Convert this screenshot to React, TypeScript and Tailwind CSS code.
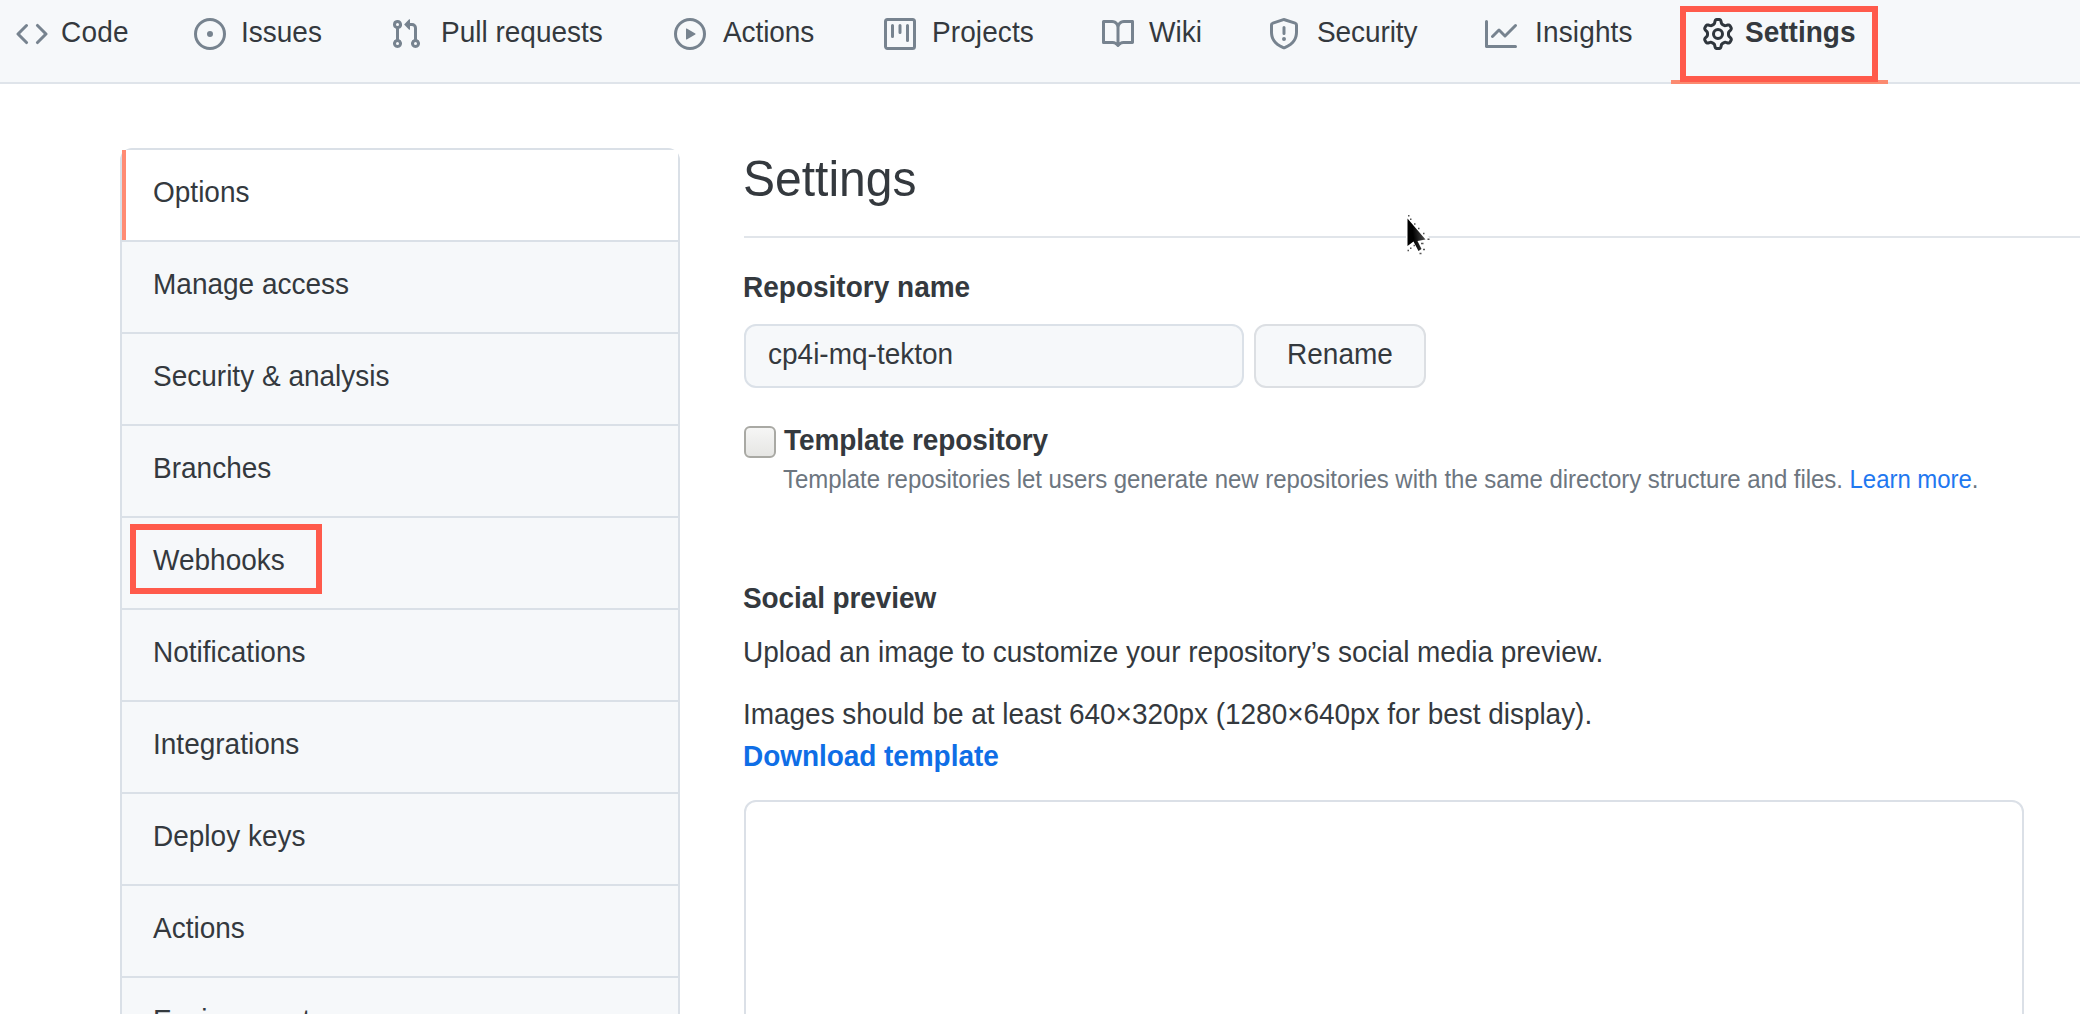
import React from 'react';

const paths = {
  code: 'M4.72 3.22a.75.75 0 011.06 1.06L2.06 8l3.72 3.72a.75.75 0 11-1.06 1.06L.47 8.53a.75.75 0 010-1.06l4.25-4.25zm6.56 0a.75.75 0 10-1.06 1.06L13.94 8l-3.72 3.72a.75.75 0 101.06 1.06l4.25-4.25a.75.75 0 000-1.06l-4.25-4.25z',
  issue: 'M8 9.5a1.5 1.5 0 100-3 1.5 1.5 0 000 3zM8 0a8 8 0 100 16A8 8 0 008 0zM1.5 8a6.5 6.5 0 1113 0 6.5 6.5 0 01-13 0z',
  pull: 'M7.177 3.073L9.573.677A.25.25 0 0110 .854v4.792a.25.25 0 01-.427.177L7.177 3.427a.25.25 0 010-.354zM3.75 2.5a.75.75 0 100 1.5.75.75 0 000-1.5zm-2.25.75a2.25 2.25 0 113 2.122v5.256a2.251 2.251 0 11-1.5 0V5.372A2.25 2.25 0 011.5 3.25zM11 2.5h-1V4h1a1 1 0 011 1v5.628a2.251 2.251 0 101.5 0V5A2.5 2.5 0 0011 2.5zm1 10.25a.75.75 0 111.5 0 .75.75 0 01-1.5 0zM3.75 12a.75.75 0 100 1.5.75.75 0 000-1.5z',
  play: 'M1.5 8a6.5 6.5 0 1113 0 6.5 6.5 0 01-13 0zM8 0a8 8 0 100 16A8 8 0 008 0zM6.379 5.227A.25.25 0 006 5.442v5.117a.25.25 0 00.379.214l4.264-2.559a.25.25 0 000-.428L6.379 5.227z',
  project:
    'M1.75 0A1.75 1.75 0 000 1.75v12.5C0 15.216.784 16 1.75 16h12.5A1.75 1.75 0 0016 14.25V1.75A1.75 1.75 0 0014.25 0H1.75zM1.5 1.75a.25.25 0 01.25-.25h12.5a.25.25 0 01.25.25v12.5a.25.25 0 01-.25.25H1.75a.25.25 0 01-.25-.25V1.75zM11.75 3a.75.75 0 00-.75.75v7.5a.75.75 0 001.5 0v-7.5a.75.75 0 00-.75-.75zm-8.25.75a.75.75 0 011.5 0v5.5a.75.75 0 01-1.5 0v-5.5zM8 3a.75.75 0 00-.75.75v3.5a.75.75 0 001.5 0v-3.5A.75.75 0 008 3z',
  book: 'M0 1.75A.75.75 0 01.75 1h4.253c1.227 0 2.317.59 3 1.501A3.744 3.744 0 0111.006 1h4.245a.75.75 0 01.75.75v10.5a.75.75 0 01-.75.75h-4.507a2.25 2.25 0 00-1.591.659l-.622.621a.75.75 0 01-1.06 0l-.622-.621A2.25 2.25 0 005.258 13H.75a.75.75 0 01-.75-.75V1.75zm8.755 3a2.25 2.25 0 012.25-2.25H14.5v9h-3.757c-.71 0-1.4.201-1.992.572l.004-7.322zm-1.504 7.324l.004-5.073-.002-2.253A2.25 2.25 0 005.003 2.5H1.5v9h3.757a3.75 3.75 0 011.994.574z',
  shield:
    'M7.467.133a1.75 1.75 0 011.066 0l5.25 1.68A1.75 1.75 0 0115 3.48V7c0 1.566-.32 3.182-1.303 4.682-.983 1.498-2.585 2.813-5.032 3.855a1.7 1.7 0 01-1.33 0c-2.447-1.042-4.049-2.357-5.032-3.855C1.32 10.182 1 8.566 1 7V3.48a1.75 1.75 0 011.217-1.667l5.25-1.68zm.61 1.429a.25.25 0 00-.153 0l-5.25 1.68a.25.25 0 00-.174.238V7c0 1.358.275 2.666 1.057 3.86.784 1.194 2.121 2.34 4.366 3.297a.2.2 0 00.154 0c2.245-.956 3.582-2.104 4.366-3.298C13.225 9.666 13.5 8.36 13.5 7V3.48a.25.25 0 00-.174-.237l-5.25-1.68zM9 10.5a1 1 0 11-2 0 1 1 0 012 0zm-.25-5.75a.75.75 0 10-1.5 0v3a.75.75 0 001.5 0v-3z',
  graph:
    'M1.5 1.75a.75.75 0 00-1.5 0v12.5c0 .414.336.75.75.75h14.5a.75.75 0 000-1.5H1.5V1.75zm14.28 2.53a.75.75 0 00-1.06-1.06L10 7.94 7.53 5.47a.75.75 0 00-1.06 0L3.22 8.72a.75.75 0 001.06 1.06L7 7.06l2.47 2.47a.75.75 0 001.06 0l5.25-5.25z',
  gear: 'M7.429 1.525a6.593 6.593 0 011.142 0c.036.003.108.036.137.146l.289 1.105c.147.56.55.967.997 1.189.174.086.341.183.501.29.417.278.97.423 1.53.27l1.102-.303c.11-.03.175.016.195.046.219.31.41.641.573.989.014.031.022.11-.059.19l-.815.806c-.411.406-.562.957-.53 1.456a4.588 4.588 0 010 .582c-.032.499.119 1.05.53 1.456l.815.806c.08.08.073.159.059.19a6.494 6.494 0 01-.573.99c-.02.029-.086.074-.195.045l-1.103-.303c-.559-.153-1.112-.008-1.529.27-.16.107-.327.204-.5.29-.449.222-.851.628-.998 1.189l-.289 1.105c-.029.11-.101.143-.137.146a6.613 6.613 0 01-1.142 0c-.036-.003-.108-.037-.137-.146l-.289-1.105c-.147-.56-.55-.967-.997-1.189a4.502 4.502 0 01-.501-.29c-.417-.278-.97-.423-1.53-.27l-1.102.303c-.11.03-.175-.016-.195-.046a6.492 6.492 0 01-.573-.989c-.014-.031-.022-.11.059-.19l.815-.806c.411-.406.562-.957.53-1.456a4.587 4.587 0 010-.582c.032-.499-.119-1.05-.53-1.456l-.815-.806c-.08-.08-.073-.159-.059-.19a6.44 6.44 0 01.573-.99c.02-.029.086-.075.195-.045l1.103.303c.559.153 1.112.008 1.529-.27.16-.107.327-.204.5-.29.449-.222.851-.628.998-1.189l.289-1.105c.029-.11.101-.143.137-.146zM8 0c-.236 0-.47.01-.701.03-.743.065-1.29.615-1.458 1.261l-.29 1.106c-.017.066-.078.158-.211.224a5.994 5.994 0 00-.668.386c-.123.082-.233.09-.3.071L3.27 2.776c-.644-.177-1.392.02-1.82.63a7.977 7.977 0 00-.704 1.217c-.315.675-.111 1.422.363 1.891l.815.806c.05.048.098.147.088.294a6.084 6.084 0 000 .772c.01.147-.038.246-.088.294l-.815.806c-.474.469-.678 1.216-.363 1.891.2.428.436.835.704 1.218.428.609 1.176.806 1.82.63l1.103-.303c.066-.019.176-.011.299.071.213.143.436.272.668.386.133.066.194.158.212.224l.289 1.106c.169.646.715 1.196 1.458 1.26a8.094 8.094 0 001.402 0c.743-.064 1.29-.614 1.458-1.26l.29-1.106c.017-.066.078-.158.211-.224a5.98 5.98 0 00.668-.386c.123-.082.233-.09.3-.071l1.102.302c.644.177 1.392-.02 1.82-.63.268-.382.505-.789.704-1.217.315-.675.111-1.422-.364-1.891l-.814-.806c-.05-.048-.098-.147-.088-.294a6.1 6.1 0 000-.772c-.01-.147.039-.246.088-.294l.814-.806c.475-.469.679-1.216.364-1.891a7.992 7.992 0 00-.704-1.218c-.428-.609-1.176-.806-1.82-.63l-1.103.303c-.066.019-.176.011-.299-.071a5.991 5.991 0 00-.668-.386c-.133-.066-.194-.158-.212-.224L10.16 1.29C9.99.645 9.444.095 8.701.031A8.094 8.094 0 008 0zm1.5 8a1.5 1.5 0 11-3 0 1.5 1.5 0 013 0zM11 8a3 3 0 11-6 0 3 3 0 016 0z',
};

function Icon({ name, className }: { name: keyof typeof paths; className: string }) {
  return (
    <svg viewBox="0 0 16 16" className={`mt-[18px] size-8 shrink-0 ${className}`} fill="currentColor" fillRule="evenodd" aria-hidden>
      <path d={paths[name]} />
    </svg>
  );
}

// One line of slightly tall lettering, stretched upwards from its baseline.
function Line({ children, className = '' }: { children: React.ReactNode; className?: string }) {
  return <span className={`block w-max origin-[0_74%] translate-y-px scale-y-[1.06] whitespace-nowrap ${className}`}>{children}</span>;
}

const tabs: { label: string; icon: keyof typeof paths; box: string }[] = [
  { label: 'Code', icon: 'code', box: 'w-[178px] gap-[13px] tracking-[0.2px]' },
  { label: 'Issues', icon: 'issue', box: 'w-[196px] gap-[15px]' },
  { label: 'Pull requests', icon: 'pull', box: 'w-[284px] gap-[19px]' },
  { label: 'Actions', icon: 'play', box: 'w-[210px] gap-[17px] tracking-[-0.1px]' },
  { label: 'Projects', icon: 'project', box: 'w-[218px] gap-[16px] tracking-[0.1px]' },
  { label: 'Wiki', icon: 'book', box: 'w-[166px] gap-[15px]' },
  { label: 'Security', icon: 'shield', box: 'w-[217px] gap-[17px] tracking-[-0.1px]' },
  { label: 'Insights', icon: 'graph', box: 'w-[217px] gap-[18px] tracking-[0.15px]' },
];

function TabBar() {
  return (
    <nav className="flex h-[84px] items-start border-b-2 border-[#dfe4ea] bg-[#f6f8fa] pl-4">
      {tabs.map((t) => (
        <a key={t.label} className={`flex shrink-0 items-start ${t.box}`}>
          <Icon name={t.icon} className="text-[#77838f]" />
          <Line className="mt-[11px]">{t.label}</Line>
        </a>
      ))}
      <a className="relative -ml-[31px] flex h-[84px] w-[217px] shrink-0 items-start gap-[11px] border-b-4 border-[#fb8a70] pl-[31px] font-bold">
        <Icon name="gear" className="text-[#2f363d]" />
        <Line className="mt-[11px]">Settings</Line>
        <span className="absolute top-[6px] left-[9px] h-[76px] w-[198px] border-6 border-[#ff5a4b]" />
      </a>
    </nav>
  );
}

const menu = ['Options', 'Manage access', 'Security & analysis', 'Branches', 'Webhooks', 'Notifications', 'Integrations', 'Deploy keys', 'Actions', 'Environments'];

function SideMenu() {
  return (
    <aside className="mt-16 ml-[120px] w-[560px] shrink-0 self-start rounded-xl border-2 border-[#dae0e7] bg-white">
      {menu.map((m) => (
        <a
          key={m}
          className={`relative block h-[92px] border-b-2 border-[#dae0e7] pt-[21px] pl-[31px] ${m === 'Options' ? 'bg-white' : 'bg-[#f6f8fa]'}`}
        >
          {m === 'Options' && <span className="absolute inset-y-0 left-0 w-1 bg-[#ff8b73]" />}
          {m === 'Webhooks' && <span className="absolute top-[6px] left-[8px] h-[70px] w-[192px] border-6 border-[#ff5a4b]" />}
          <Line>{m}</Line>
        </a>
      ))}
    </aside>
  );
}

function Pointer() {
  return (
    <svg className="absolute top-[131px] left-[662px] h-[42px] w-[28px]" viewBox="0 0 28 42">
      <defs>
        <linearGradient id="pointer-fill" x1="0" y1="0.5" x2="1" y2="0.3">
          <stop offset="0.3" stopColor="#000" />
          <stop offset="1" stopColor="#555" />
        </linearGradient>
      </defs>
      <path d="M0 0V36H10L13 40H20V34L23 27V22Z" fill="#fff" />
      <path d="M1.500 3.500V31L7.500 26.500L12.500 36L15.500 34L11.500 26L19.500 24.500Z" fill="url(#pointer-fill)" />
      <path
        d="M2 .8h1.500M4 4.300h1.500M8 9h1.500M12 13.500h1.500M17 18.500h1.500M21.500 24.300h2M15 28.500h2.500M17 34.500h2M13.500 38.500h2M4 33.300h1.500M1.500 35.500h1.500M7.500 30.500h1.500"
        stroke="#555"
        strokeWidth="1.5"
      />
    </svg>
  );
}

function Content() {
  return (
    <main className="relative ml-16 flex-1 pt-[60px]">
      <h1 className="h-[94px] border-b-2 border-[#e1e5ea] text-[48px] leading-[72px]">
        <span className="-ml-px block w-max origin-[0_73%] scale-y-[1.03]">Settings</span>
      </h1>
      <Pointer />
      <h2 className="mt-7 font-bold">
        <Line className="-ml-px">Repository name</Line>
      </h2>
      <div className="mt-4 flex gap-[10px]">
        <div className="h-16 w-[500px] rounded-xl border-2 border-[#dbe1e8] bg-[#f6f8fa] pt-[7px] pl-[22px]">
          <Line>cp4i-mq-tekton</Line>
        </div>
        <button className="flex h-16 w-[172px] items-start justify-center rounded-xl border-2 border-[#dcdfe3] bg-[#f6f8fa] pt-[7px]">
          <Line>Rename</Line>
        </button>
      </div>
      <div className="mt-[31px] flex gap-2">
        <span className="mt-[7px] size-8 rounded-md border-2 border-[#a9a9a4] bg-linear-to-b from-[#f6f6f5] to-[#e6e6e4]" />
        <div>
          <h2 className="font-bold tracking-[-0.08px]">
            <Line>Template repository</Line>
          </h2>
          <p className="text-2xl leading-9 tracking-[-0.045px] text-[#6d767f]">
            <Line className="-ml-px">
              Template repositories let users generate new repositories with the same directory structure and files.{' '}
              <a className="text-[#1f78f0]">Learn more</a>.
            </Line>
          </p>
        </div>
      </div>
      <h2 className="mt-20 font-bold tracking-[-0.1px]">
        <Line className="-ml-px">Social preview</Line>
      </h2>
      <p className="mt-3 tracking-[-0.045px]">
        <Line className="-ml-px">Upload an image to customize your repository’s social media preview.</Line>
      </p>
      <p className="mt-5 tracking-[-0.035px]">
        <Line className="-ml-px">Images should be at least 640×320px (1280×640px for best display).</Line>
      </p>
      <a className="block font-bold tracking-[-0.06px] text-[#0f6ee6]">
        <Line className="-ml-px">Download template</Line>
      </a>
      <div className="mt-[23px] h-[640px] w-[1280px] rounded-xl border-2 border-[#dbe0e7]" />
    </main>
  );
}

export default function App() {
  return (
    <div className="flex h-[1014px] w-[2080px] flex-col overflow-hidden bg-white font-['Liberation_Sans',Arial,sans-serif] text-[28px] leading-[42px] text-[#34393e]">
      <TabBar />
      <div className="flex min-h-0 flex-1 overflow-hidden">
        <SideMenu />
        <Content />
      </div>
    </div>
  );
}
